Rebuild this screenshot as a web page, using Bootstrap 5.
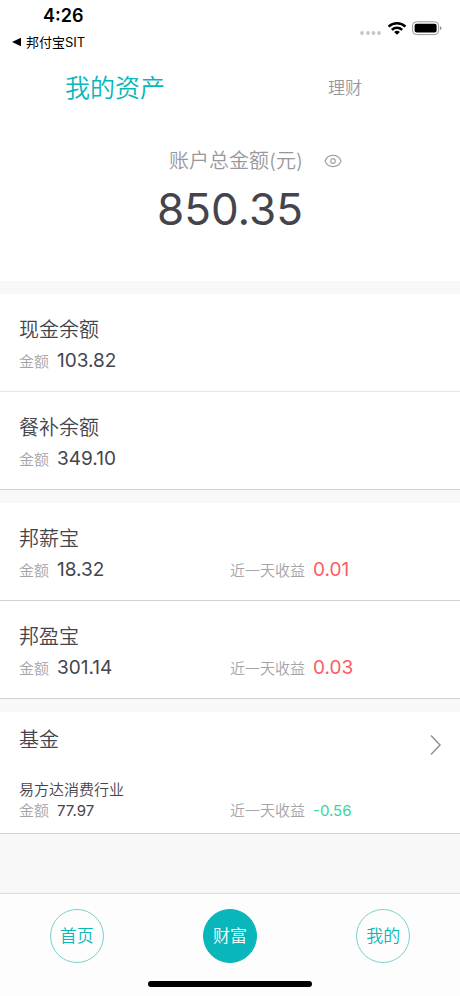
<!DOCTYPE html>
<html lang="zh-CN">
<head>
<meta charset="utf-8">
<meta name="viewport" content="width=device-width, initial-scale=1">
<title>我的资产</title>
<link rel="stylesheet" href="https://cdn.jsdelivr.net/npm/bootstrap@5.3.0/dist/css/bootstrap.min.css">
<style>
  :root { --teal: #09b6ba; --ink: #45444c; --muted-ink: #a4a4a8; --rule: #d2d2d4; }
  body { font-family: Inter, "Noto Sans CJK SC", sans-serif; background: #f8f8f8; color: var(--ink); font-weight: 400; line-height: 1; }
  .cjk { font-weight: 350; }
  .status { height: 56px; color: #000; }
  .clock { font-size: 18px; line-height: 32px; font-weight: 600; padding-left: 43px; }
  .back-app { font-size: 13px; line-height: 20px; font-weight: 400; color: #000; padding-left: 11px; }
  .back-app:hover { color: #000; }
  .status-icons { padding: 19px 18px 0 0; }
  .tab { height: 64px; border: 0; background: none; color: #98989c; font-size: 17px; padding: 0; }
  .tab.active { color: var(--teal); font-size: 25px; }
  .summary { height: 161px; padding-top: 27px; }
  .caption { font-size: 20px; line-height: 28px; color: #98989c; }
  .eye { margin-left: 20px; margin-right: -52px; }
  .total { font-size: 44px; line-height: 48px; margin-top: 10px; }
  .group-gap { margin-top: 13px; }
  .entry { padding: 22px 19px 16px; border-bottom: 1px solid var(--rule); }
  .soft { border-color: #e5e5e7; }
  .name { font-size: 20px; line-height: 28px; margin: 0; }
  .figures { height: 28px; margin-top: 3px; line-height: 28px; }
  .figures .col-6 { display: flex; align-items: baseline; gap: 8px; }
  .label { font-size: 15px; color: var(--muted-ink); }
  .amount { font-size: 19px; }
  .gain { color: #fb5c62; }
  .loss { color: #37d79c; }
  .fund { padding: 14px 19px 12px; }
  .fund-name { font-size: 15px; line-height: 21px; margin: 25px 0 0; }
  .fund .figures { height: 21px; line-height: 21px; margin: 0; }
  .fund .amount { font-size: 15px; }
  .more { padding: 8px 0 0; margin-bottom: -8px; color: #949498; }
  .bottom { background: #fdfdfd; border-top: 1px solid #dedee0; padding-top: 15px; }
  .disc { width: 54px; height: 54px; border: 1px solid #7ad1cf; color: var(--teal); font-size: 17px; }
  .disc.active { background: var(--teal); border-color: var(--teal); color: #fff; }
  .home-bar { width: 164px; height: 6px; background: #000; margin: 18px auto 9px; }
</style>
<script src="https://cdn.jsdelivr.net/npm/bootstrap@5.3.0/dist/js/bootstrap.bundle.min.js"></script>
</head>
<body>
<div class="d-flex flex-column min-vh-100">
  <header class="bg-white">
    <div class="status d-flex justify-content-between">
      <div>
        <div class="clock">4:26</div>
        <a class="back-app d-flex align-items-center text-decoration-none gap-1" href="#">
          <svg width="11" height="10" viewBox="0 0 11 10" aria-hidden="true"><path d="M1 5 10 .8v8.400z"/></svg>
          <span>邦付宝SIT</span>
        </a>
      </div>
      <div class="status-icons">
        <svg width="82" height="16" viewBox="0 0 82 16" role="img" aria-label="Wi-Fi，电池已满">
          <g fill="#c6c6c6"><circle cx="2" cy="12" r="1.900"/><circle cx="8" cy="12" r="1.900"/><circle cx="13.500" cy="12" r="1.900"/><circle cx="19" cy="12" r="1.900"/></g>
          <g fill="none" stroke="#000" stroke-width="2.500"><path d="M28.600 5.600a12.300 12.300 0 0 1 16.800 0"/><path d="M31.800 8.900a7.600 7.600 0 0 1 10.400 0"/></g>
          <path d="M37 13.800 34.100 11.100a4.300 4.300 0 0 1 5.800 0z"/>
          <rect x="52.600" y=".8" width="26" height="12.800" rx="3.800" fill="none" stroke="#999"/>
          <rect x="54.600" y="2.800" width="22" height="8.800" rx="2"/>
          <path d="M80 5.300c2 .8 2 3 0 3.800z" fill="#888"/>
        </svg>
      </div>
    </div>
    <div class="row g-0" role="tablist">
      <button class="tab active cjk col-6" type="button" role="tab" aria-selected="true">我的资产</button>
      <button class="tab cjk col-6" type="button" role="tab" aria-selected="false">理财</button>
    </div>
    <section class="summary text-center">
      <div class="caption cjk d-flex justify-content-center align-items-center">
        <span>账户总金额(元)</span>
        <button class="eye btn p-0 border-0 d-flex" type="button" aria-label="隐藏金额">
          <svg width="20" height="16" viewBox="0 0 20 16" fill="none" stroke="#a3a3a6" stroke-width="1.200"><path d="M2 8C5 .6 15 .6 18 8 15 15.400 5 15.400 2 8z"/><circle cx="10" cy="8" r="2.300"/></svg>
        </button>
      </div>
      <div class="total">850.35</div>
    </section>
  </header>

  <main class="mb-4">
    <section class="bg-white group-gap">
      <div class="entry soft">
        <h2 class="name cjk">现金余额</h2>
        <div class="figures row g-0"><div class="col-6"><span class="label cjk">金额</span><span class="amount">103.82</span></div></div>
      </div>
      <div class="entry">
        <h2 class="name cjk">餐补余额</h2>
        <div class="figures row g-0"><div class="col-6"><span class="label cjk">金额</span><span class="amount">349.10</span></div></div>
      </div>
    </section>
    <section class="bg-white group-gap">
      <div class="entry">
        <h2 class="name cjk">邦薪宝</h2>
        <div class="figures row g-0">
          <div class="col-6"><span class="label cjk">金额</span><span class="amount">18.32</span></div>
          <div class="col-6"><span class="label cjk">近一天收益</span><span class="amount gain">0.01</span></div>
        </div>
      </div>
      <div class="entry">
        <h2 class="name cjk">邦盈宝</h2>
        <div class="figures row g-0">
          <div class="col-6"><span class="label cjk">金额</span><span class="amount">301.14</span></div>
          <div class="col-6"><span class="label cjk">近一天收益</span><span class="amount gain">0.03</span></div>
        </div>
      </div>
    </section>
    <section class="bg-white group-gap">
      <div class="entry fund">
        <div class="d-flex justify-content-between align-items-start">
          <h2 class="name cjk">基金</h2>
          <a class="more d-flex" href="#" aria-label="查看基金">
            <svg width="12" height="22" viewBox="0 0 12 22" fill="none" stroke="currentColor" stroke-width="1.600"><path d="M2 1.500 11 11l-9 9.500"/></svg>
          </a>
        </div>
        <p class="fund-name cjk">易方达消费行业</p>
        <div class="figures row g-0">
          <div class="col-6"><span class="label cjk">金额</span><span class="amount">77.97</span></div>
          <div class="col-6"><span class="label cjk">近一天收益</span><span class="amount loss">-0.56</span></div>
        </div>
      </div>
    </section>
  </main>

  <footer class="bottom mt-auto">
    <nav class="row g-0" aria-label="主导航">
      <div class="col-4 d-flex justify-content-center"><a class="disc cjk rounded-circle d-flex align-items-center justify-content-center text-decoration-none" href="#">首页</a></div>
      <div class="col-4 d-flex justify-content-center"><a class="disc active cjk rounded-circle d-flex align-items-center justify-content-center text-decoration-none" href="#" aria-current="page">财富</a></div>
      <div class="col-4 d-flex justify-content-center"><a class="disc cjk rounded-circle d-flex align-items-center justify-content-center text-decoration-none" href="#">我的</a></div>
    </nav>
    <div class="home-bar rounded-pill"></div>
  </footer>
</div>
</body>
</html>
